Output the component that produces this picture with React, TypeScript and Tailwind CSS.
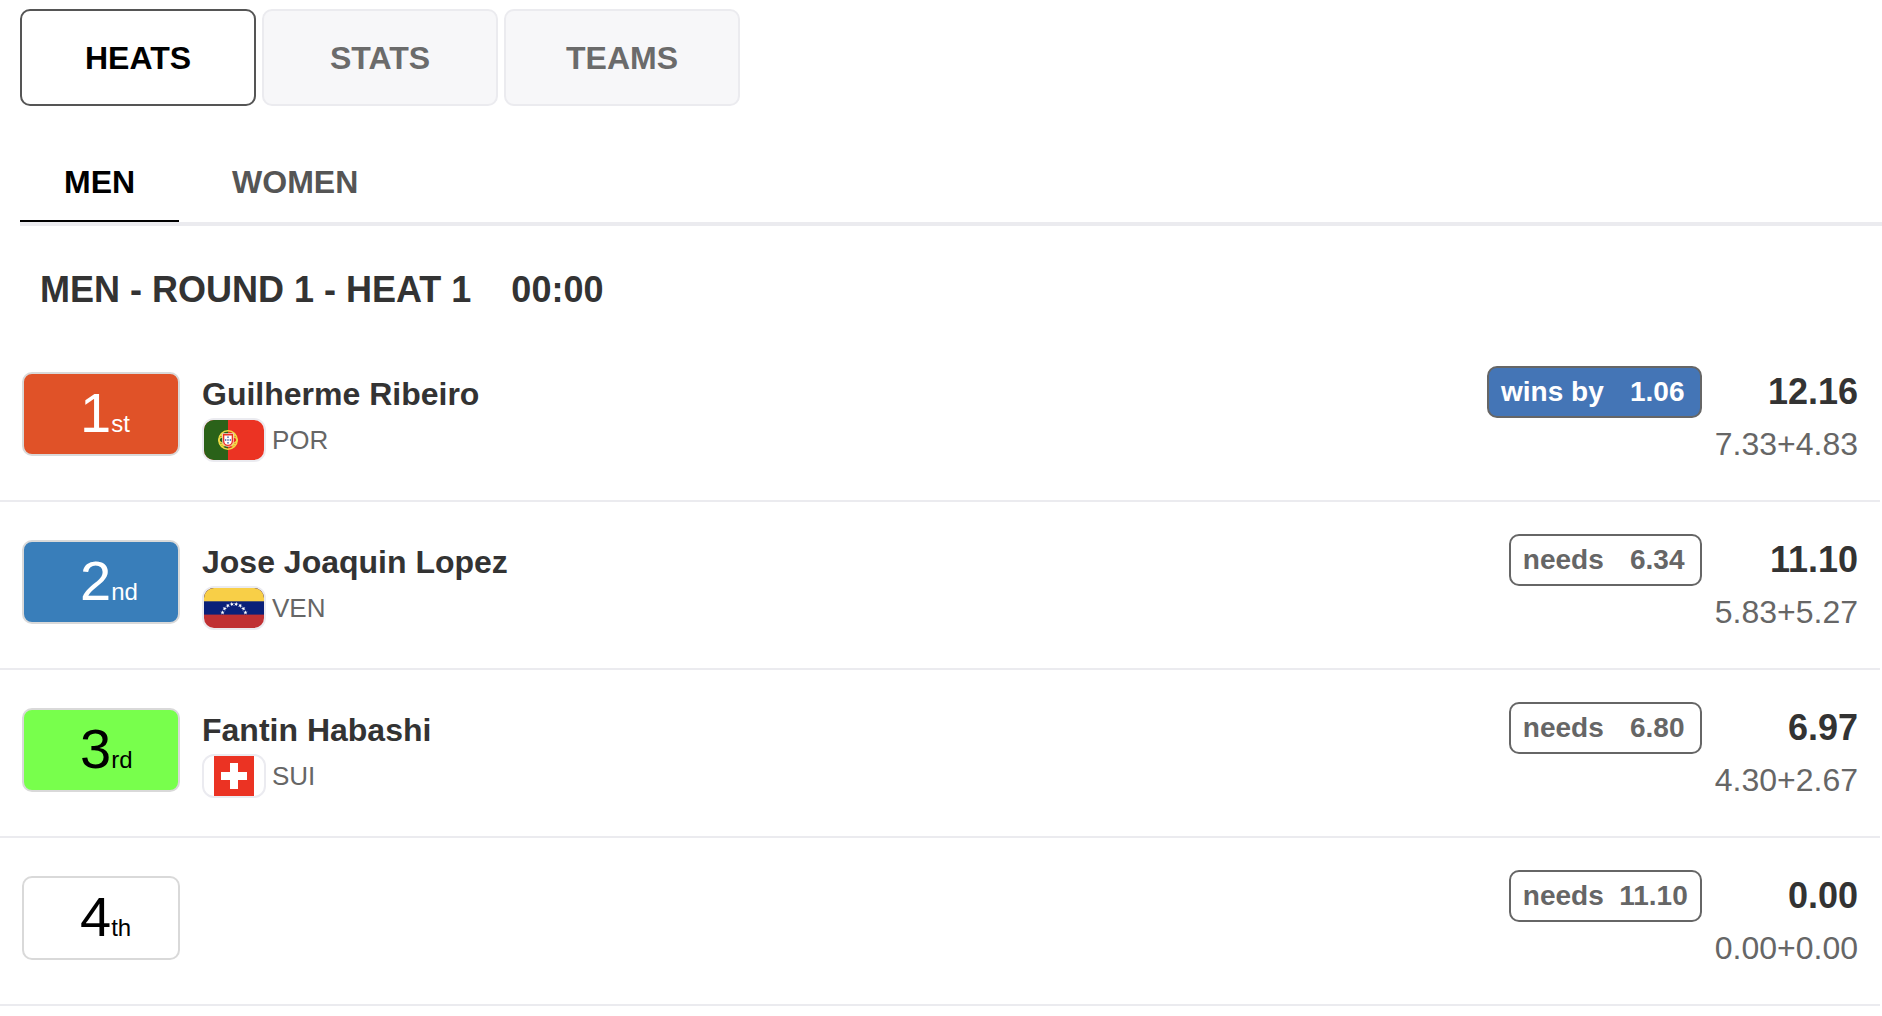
import { useState } from "react";
import clsx from "clsx";

type CountryCode = "POR" | "VEN" | "SUI";

type HeatEntry = {
  place: number;
  suffix: string;
  jersey: string;
  name?: string;
  country?: CountryCode;
  status: "wins by" | "needs";
  margin: string;
  total: string;
  waves: string;
};

const SECTIONS = ["HEATS", "STATS", "TEAMS"];
const DIVISIONS = ["MEN", "WOMEN"];

const ENTRIES: HeatEntry[] = [
  {
    place: 1,
    suffix: "st",
    jersey: "bg-[#e05228] text-white",
    name: "Guilherme Ribeiro",
    country: "POR",
    status: "wins by",
    margin: "1.06",
    total: "12.16",
    waves: "7.33+4.83",
  },
  {
    place: 2,
    suffix: "nd",
    jersey: "bg-[#397eba] text-white",
    name: "Jose Joaquin Lopez",
    country: "VEN",
    status: "needs",
    margin: "6.34",
    total: "11.10",
    waves: "5.83+5.27",
  },
  {
    place: 3,
    suffix: "rd",
    jersey: "bg-[#78ff4c] text-black",
    name: "Fantin Habashi",
    country: "SUI",
    status: "needs",
    margin: "6.80",
    total: "6.97",
    waves: "4.30+2.67",
  },
  {
    place: 4,
    suffix: "th",
    jersey: "bg-white text-black",
    status: "needs",
    margin: "11.10",
    total: "0.00",
    waves: "0.00+0.00",
  },
];

function PortugalFlag() {
  return (
    <svg viewBox="0 0 60 40" className="block h-full w-full" aria-hidden="true">
      <rect width="60" height="40" fill="#eb3323" />
      <rect width="24" height="40" fill="#2a6219" />
      {/* Armillary sphere */}
      <g fill="none" stroke="#f0dc46" strokeWidth="1.5">
        <circle cx="24" cy="20" r="9.2" />
        <ellipse cx="24" cy="20" rx="9.2" ry="4" />
        <path d="M17.5 13.5C20 20 24 25 30.5 26.5M30.5 13.5C28 20 24 25 17.5 26.5" />
        <path d="M16 15.5h16M16 24.5h16" />
      </g>
      {/* Shield */}
      <path d="M18.5 13.5h11v7.5a5.5 5.5 0 0 1-11 0z" fill="#eb3323" stroke="#fff" strokeWidth="0.6" />
      <path d="M20.3 15.5h7.4v5.5a3.7 3.7 0 0 1-7.4 0z" fill="#fff" />
      <g fill="#4a64ac">
        <rect x="23.3" y="16.4" width="1.4" height="1.6" />
        <rect x="23.3" y="19.2" width="1.4" height="1.6" />
        <rect x="23.3" y="22" width="1.4" height="1.6" />
        <rect x="20.9" y="19.2" width="1.4" height="1.6" />
        <rect x="25.7" y="19.2" width="1.4" height="1.6" />
      </g>
    </svg>
  );
}

const STAR = "M0-2.3L.6-.7 2.2-.7.9.3 1.4 1.9 0 .9-1.4 1.9-.9.3-2.2-.7-.6-.7z";
const STAR_ANGLES = [-73, -52, -31, -10, 10, 31, 52, 73];

function VenezuelaFlag() {
  return (
    <svg viewBox="0 0 60 40" className="block h-full w-full" aria-hidden="true">
      <rect width="60" height="40" fill="#c03033" />
      <rect width="60" height="26.6" fill="#0a2079" />
      <rect width="60" height="13.3" fill="#f8cf47" />
      {STAR_ANGLES.map((angle) => (
        <path
          key={angle}
          d={STAR}
          fill="#fff"
          transform={`translate(30 28) rotate(${angle}) translate(0 -12)`}
        />
      ))}
    </svg>
  );
}

function SwissFlag() {
  return (
    <svg viewBox="0 0 60 40" className="block h-full w-full" aria-hidden="true">
      <rect x="10" width="40" height="40" fill="#eb3323" />
      <path d="M26 7h8v9h9v8h-9v9h-8v-9h-9v-8h9z" fill="#fff" />
    </svg>
  );
}

const FLAGS: Record<CountryCode, () => React.JSX.Element> = {
  POR: PortugalFlag,
  VEN: VenezuelaFlag,
  SUI: SwissFlag,
};

function Country({ code }: { code: CountryCode }) {
  const Flag = FLAGS[code];
  return (
    <div className="mt-1 flex items-center gap-[6px]">
      <span className="h-11 w-16 overflow-hidden rounded-[12px] border-2 border-[#ebebf0]">
        <Flag />
      </span>
      <span className="text-[26px] leading-10 text-[#666]">{code}</span>
    </div>
  );
}

function EntryRow({ entry }: { entry: HeatEntry }) {
  const winning = entry.status === "wins by";

  return (
    <li className="flex items-start border-b-2 border-[#ebebef] px-[22px] pt-8 pb-[30px]">
      <div
        className={clsx(
          "mt-[6px] flex h-[84px] w-[158px] shrink-0 items-baseline rounded-[10px] border-2 border-[#d9d9d9] pt-[7px] pl-14",
          entry.jersey,
        )}
      >
        <span className="text-[56px] leading-[64px]">{entry.place}</span>
        <span className="text-2xl">{entry.suffix}</span>
      </div>

      <div className="mt-2 ml-[22px] min-w-0 flex-1">
        {entry.name && <p className="truncate text-[32px] leading-10 font-bold">{entry.name}</p>}
        {entry.country && <Country code={entry.country} />}
      </div>

      <div
        className={clsx(
          "mr-[13px] flex h-[52px] shrink-0 items-center rounded-[10px] border-2 border-[#666] px-3 text-[28px] font-bold",
          winning ? "bg-[#4475b6] text-white" : "bg-white text-[#666]",
        )}
      >
        <span>{entry.status}</span>
        <span className="flex w-[84px] justify-end">
          <span className="min-w-[61px] text-center">{entry.margin}</span>
        </span>
      </div>

      <div className="shrink-0 text-right">
        <p className="text-4xl leading-[52px] font-bold">{entry.total}</p>
        <p className="text-[32px] leading-[52px] text-[#666]">{entry.waves}</p>
      </div>
    </li>
  );
}

export default function App() {
  const [section, setSection] = useState("HEATS");
  const [division, setDivision] = useState("MEN");

  return (
    <main className="bg-white font-['Liberation_Sans',Arial,sans-serif] text-[#333]">
      <nav className="flex gap-[6px] px-5 pt-[9px]">
        {SECTIONS.map((label) => (
          <button
            key={label}
            type="button"
            onClick={() => setSection(label)}
            className={clsx(
              "h-[97px] w-[236px] rounded-[10px] border-2 text-[32px] font-bold",
              label === section
                ? "border-[#555] bg-white text-black"
                : "border-[#ebebef] bg-[#f7f7f9] text-[#6b6b6b]",
            )}
          >
            {label}
          </button>
        ))}
      </nav>

      <div className="mt-10 ml-5 flex gap-[9px] border-b-4 border-[#ebebef]">
        {DIVISIONS.map((label) => (
          <button
            key={label}
            type="button"
            onClick={() => setDivision(label)}
            className={clsx(
              "border-b-2 px-11 pt-[18px] pb-5 text-[32px] leading-9 font-bold",
              label === division ? "border-black text-black" : "border-transparent text-[#555]",
            )}
          >
            {label}
          </button>
        ))}
      </div>

      <header className="flex gap-10 px-10 pt-11 pb-6 text-4xl font-bold">
        <h1>MEN - ROUND 1 - HEAT 1</h1>
        <time>00:00</time>
      </header>

      <ol className="mr-0.5">
        {ENTRIES.map((entry) => (
          <EntryRow key={entry.place} entry={entry} />
        ))}
      </ol>
    </main>
  );
}
